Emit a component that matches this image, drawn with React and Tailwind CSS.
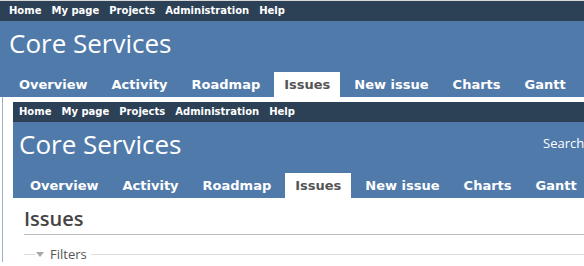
import React from 'react';

const topLinks = ['Home', 'My page', 'Projects', 'Administration', 'Help'];
const tabs = ['Overview', 'Activity', 'Roadmap', 'Issues', 'New issue', 'Charts', 'Gantt'];

function Header({ pad, tabPad, search }) {
  return (
    <div className="w-full">
      {/* Top menu */}
      <div className={`h-[20px] bg-[#2c4056] flex items-center gap-[10px] ${pad} text-[10px] font-bold text-white leading-[20px] font-['DejaVu_Sans',sans-serif] whitespace-nowrap`}>
        {topLinks.map((l) => (
          <span key={l}>{l}</span>
        ))}
      </div>

      {/* Blue header */}
      <div className="h-[76px] bg-[#507aaa] flex flex-col">
        <div className={`relative ${pad} pt-[7px] h-[51px]`}>
          <h1 className="text-[26px] leading-[30px] text-white font-['Open_Sans',sans-serif] whitespace-nowrap">Core Services</h1>
          {search && (
            <span className="absolute left-[530px] top-[12px] text-[13px] text-white font-['Open_Sans',sans-serif] whitespace-nowrap">Search:</span>
          )}
        </div>
        <div className={`flex gap-[4px] ${tabPad} whitespace-nowrap`}>
          {tabs.map((t) => (
            <div
              key={t}
              className={`h-[25px] px-[10px] leading-[25px] text-[13px] font-bold font-['DejaVu_Sans',sans-serif] ${
                t === 'Issues' ? 'bg-white text-[#555]' : 'text-white'
              }`}
            >
              {t}
            </div>
          ))}
        </div>
      </div>
    </div>
  );
}

export default function App() {
  return (
    <div className="w-[584px] h-[266px] overflow-hidden bg-white">
      <div className="h-px bg-[#d9d9d9]" />
      <Header pad="pl-[9px]" tabPad="pl-[9px]" />

      <div className="flex">
        <div className="w-[2px]" />
        <div className="w-px bg-[#9fb0c2]" />
        <div className="flex-1 min-w-0 pl-[10px] pt-[5px] overflow-hidden">
          <div className="w-[700px]">
            <Header pad="pl-[6px]" tabPad="pl-[7px]" search />

            {/* Nested content */}
            <div className="pl-[11px] pt-[9px]">
              <h2 className="text-[20px] leading-[24px] font-semibold text-[#444] font-['Open_Sans',sans-serif] pb-[3px] border-b border-[#bbb]">
                Issues
              </h2>
              <div className="flex items-center mt-[11px] h-[16px]">
                <div className="w-[11px] h-px bg-[#ddd]" />
                <svg width="8" height="5" viewBox="0 0 8 5" className="ml-[1px] mr-[6px]">
                  <path d="M0 0 L8 0 L4 5 Z" fill="#a8a8a8" />
                </svg>
                <span className="text-[13px] leading-[16px] text-[#555] font-['Open_Sans',sans-serif]">Filters</span>
                <div className="flex-1 h-px bg-[#ddd] ml-[4px]" />
              </div>
            </div>
          </div>
        </div>
      </div>
    </div>
  );
}
